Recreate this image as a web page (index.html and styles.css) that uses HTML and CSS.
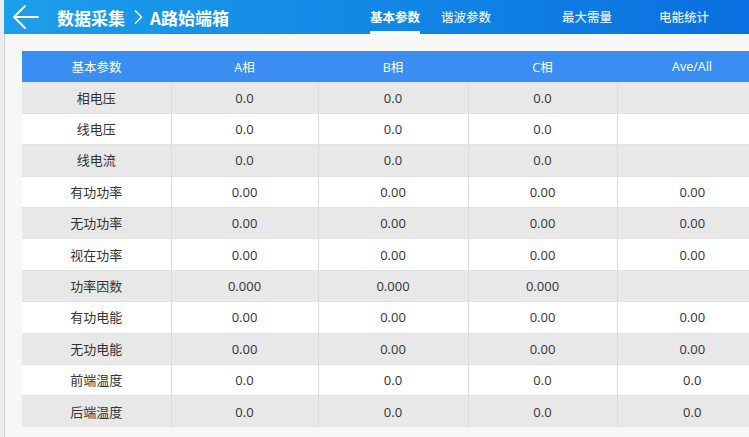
FILE: index.html
```html
<!DOCTYPE html>
<html lang="zh">
<head>
<meta charset="utf-8">
<link rel="stylesheet" href="styles.css">
</head>
<body>
<div class="page">
  <header class="topbar">
    <div class="crumbs">
      <svg class="back" width="28" height="26" viewBox="0 0 28 26"><path d="M26 13H3M13 2L2 13l11 11" fill="none" stroke="#fff" stroke-width="1.8" stroke-linecap="round" stroke-linejoin="round"/></svg>
      <span class="crumb">数据采集</span>
      <svg class="chev" width="10" height="16" viewBox="0 0 10 16"><path d="M2 1.5L8.5 8 2 14.5" fill="none" stroke="#fff" stroke-width="1.4"/></svg>
      <span class="crumb">A路始端箱</span>
    </div>
    <nav class="tabs">
      <span class="tab active">基本参数</span>
      <span class="tab t2">谐波参数</span>
      <span class="tab t3">最大需量</span>
      <span class="tab t4">电能统计</span>
    </nav>
  </header>
  <main class="main">
    <table class="grid">
      <colgroup><col class="c1"><col class="c2"><col class="c3"><col class="c4"><col class="c5"></colgroup>
      <thead>
        <tr><th>基本参数</th><th>A相</th><th>B相</th><th>C相</th><th>Ave/All</th></tr>
      </thead>
      <tbody>
        <tr><td>相电压</td><td>0.0</td><td>0.0</td><td>0.0</td><td></td></tr>
        <tr><td>线电压</td><td>0.0</td><td>0.0</td><td>0.0</td><td></td></tr>
        <tr><td>线电流</td><td>0.0</td><td>0.0</td><td>0.0</td><td></td></tr>
        <tr><td>有功功率</td><td>0.00</td><td>0.00</td><td>0.00</td><td>0.00</td></tr>
        <tr><td>无功功率</td><td>0.00</td><td>0.00</td><td>0.00</td><td>0.00</td></tr>
        <tr><td>视在功率</td><td>0.00</td><td>0.00</td><td>0.00</td><td>0.00</td></tr>
        <tr><td>功率因数</td><td>0.000</td><td>0.000</td><td>0.000</td><td></td></tr>
        <tr><td>有功电能</td><td>0.00</td><td>0.00</td><td>0.00</td><td>0.00</td></tr>
        <tr><td>无功电能</td><td>0.00</td><td>0.00</td><td>0.00</td><td>0.00</td></tr>
        <tr><td>前端温度</td><td>0.0</td><td>0.0</td><td>0.0</td><td>0.0</td></tr>
        <tr><td>后端温度</td><td>0.0</td><td>0.0</td><td>0.0</td><td>0.0</td></tr>
      </tbody>
    </table>
  </main>
</div>
</body>
</html>
```
FILE: styles.css
```css
html, body {
  margin: 0;
  padding: 0;
  width: 749px;
  height: 437px;
  overflow: hidden;
  background: #ececec;
  font-family: "Open Sans", "Noto Sans CJK SC", sans-serif;
}
.page {
  padding-left: 4px;
  height: 437px;
  display: flex;
  flex-direction: column;
}
.topbar {
  height: 34px;
  flex: none;
  display: flex;
  align-items: center;
  background: linear-gradient(to right, #1c9fea 0%, #138ae6 45%, #0a6fe0 100%);
  color: #fff;
}
.crumbs {
  display: flex;
  align-items: center;
  width: 366px;
  flex: none;
}
.back {
  margin-left: 8px;
  margin-right: 17px;
}
.crumb {
  font-family: "Noto Sans CJK SC", sans-serif;
  font-weight: 700;
  font-size: 17px;
}
.chev {
  margin: 0 7px 0 8px;
}
.tabs {
  display: flex;
  height: 34px;
}
.tab {
  font-family: "Noto Sans CJK SC", sans-serif;
  font-size: 12.5px;
  font-weight: 500;
  display: flex;
  align-items: center;
  height: 34px;
  box-sizing: border-box;
  padding-bottom: 2px;
  color: rgba(255,255,255,0.9);
}
.t2 { margin-left: 21px; }
.t3 { margin-left: 71px; }
.t4 { margin-left: 47px; }
.tab.active {
  color: #fff;
  font-weight: 700;
  border-bottom: 3px solid #fff;
  padding-bottom: 0;
  padding-top: 1px;
}
.main {
  flex: 1;
  background: #f7f7f7;
  border-left: 1px solid #cfcfcf;
  padding: 17px 0 0 17px;
  overflow: hidden;
}
.grid {
  table-layout: fixed;
  width: 745px;
  border-collapse: collapse;
  font-size: 13px;
  color: #333;
}
.c1 { width: 149px; }
.c2 { width: 147px; }
.c3 { width: 150px; }
.c4 { width: 149px; }
.c5 { width: 150px; }
.grid thead tr { height: 31px; }
.grid tbody tr { height: 31.4px; }
.grid th {
  background: #3a8ef2;
  color: #fff;
  font-weight: 400;
  font-size: 12.5px;
  padding: 0;
  text-align: center;
}
.grid td {
  padding: 0;
  line-height: 16px;
  text-align: center;
  border-left: 1px solid #dcdcdc;
  border-top: 1px solid #e2e2e2;
}
.grid td:first-child { border-left: none; }
.grid tbody tr:nth-child(odd) td { background: #e8e8e8; }
.grid tbody tr:nth-child(even) td { background: #fff; }
```
